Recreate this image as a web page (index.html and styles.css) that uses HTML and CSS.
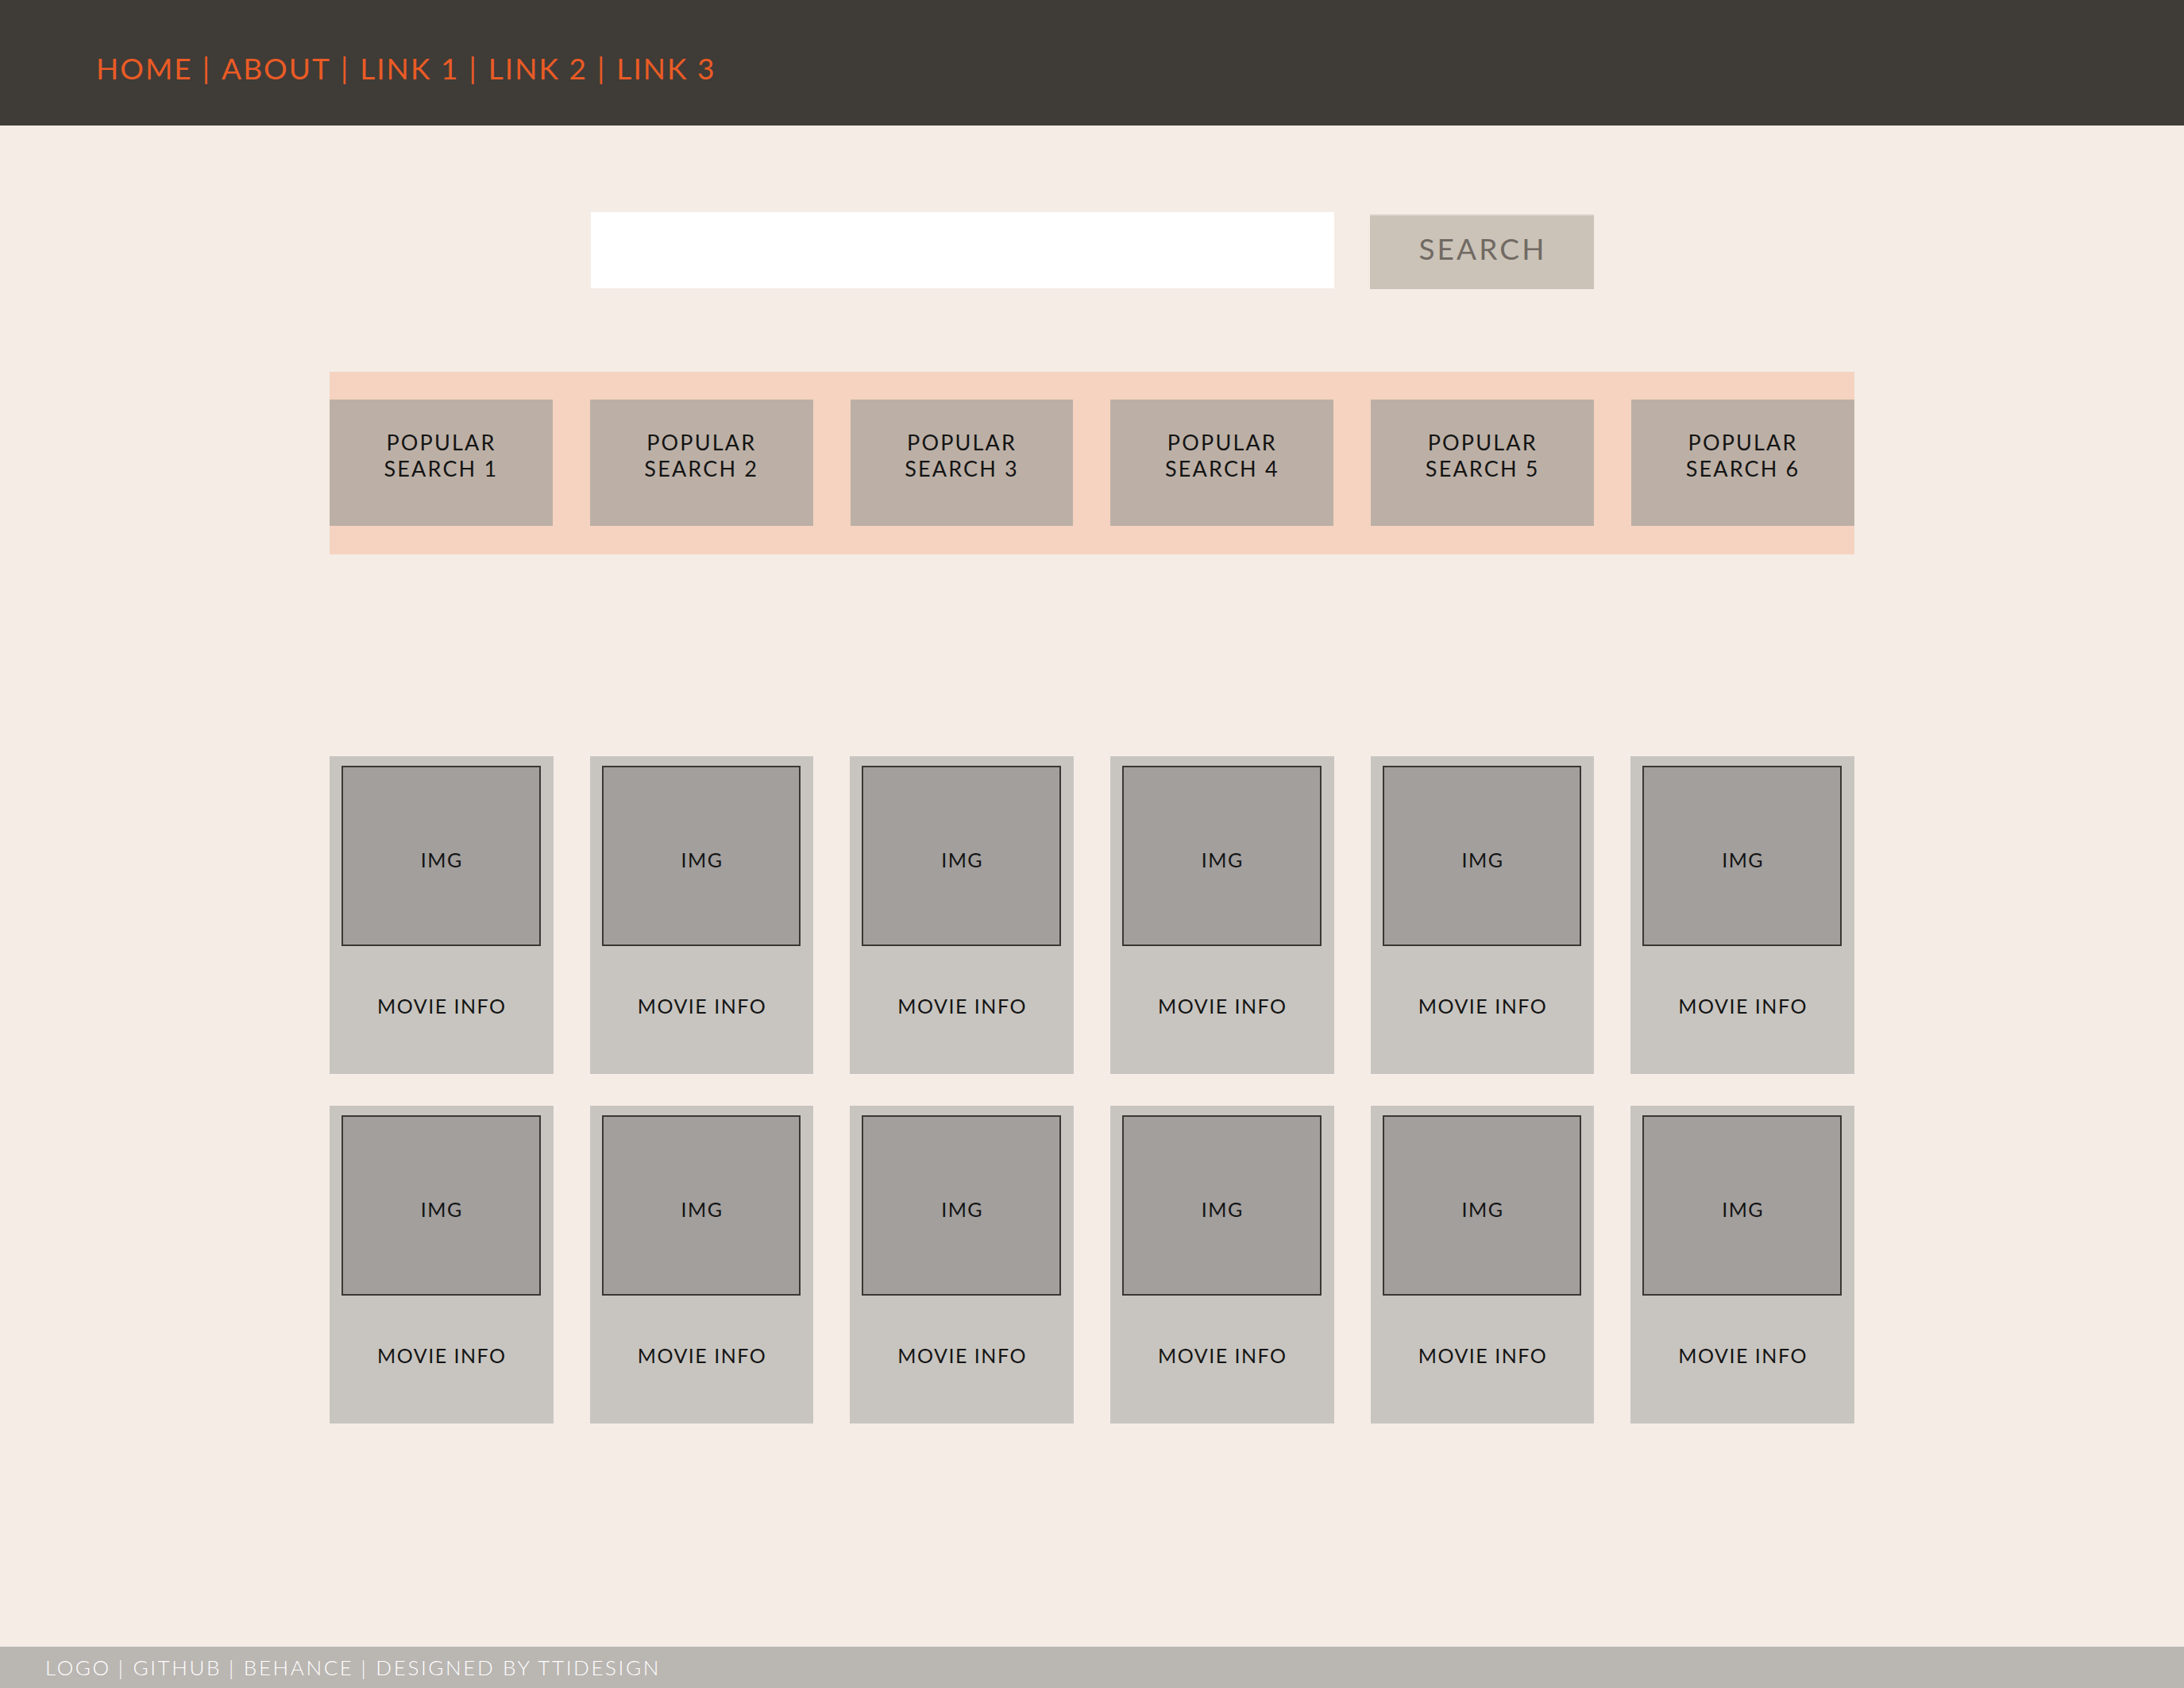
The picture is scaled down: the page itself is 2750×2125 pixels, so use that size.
FILE: index.html
```html
<!DOCTYPE html>
<html lang="en">
<head>
<meta charset="utf-8">
<title>Movie Search</title>
<link rel="stylesheet" href="styles.css">
</head>
<body>
<header class="site-header">
  <nav class="nav">
    <a class="nav-link" href="#">HOME</a><span class="sep">|</span><a class="nav-link" href="#">ABOUT</a><span class="sep">|</span><a class="nav-link" href="#">LINK 1</a><span class="sep">|</span><a class="nav-link" href="#">LINK 2</a><span class="sep">|</span><a class="nav-link" href="#">LINK 3</a>
  </nav>
</header>
<main class="main">
  <form class="search" onsubmit="return false">
    <input class="search-input" type="text" aria-label="Search">
    <button class="search-btn" type="submit">SEARCH</button>
  </form>
  <section class="popular">
    <div class="pop-tile">POPULAR<br>SEARCH 1</div>
    <div class="pop-tile">POPULAR<br>SEARCH 2</div>
    <div class="pop-tile">POPULAR<br>SEARCH 3</div>
    <div class="pop-tile">POPULAR<br>SEARCH 4</div>
    <div class="pop-tile">POPULAR<br>SEARCH 5</div>
    <div class="pop-tile">POPULAR<br>SEARCH 6</div>
  </section>
  <section class="movies">
    <div class="card"><div class="card-img">IMG</div><div class="card-info">MOVIE INFO</div></div>
    <div class="card"><div class="card-img">IMG</div><div class="card-info">MOVIE INFO</div></div>
    <div class="card"><div class="card-img">IMG</div><div class="card-info">MOVIE INFO</div></div>
    <div class="card"><div class="card-img">IMG</div><div class="card-info">MOVIE INFO</div></div>
    <div class="card"><div class="card-img">IMG</div><div class="card-info">MOVIE INFO</div></div>
    <div class="card"><div class="card-img">IMG</div><div class="card-info">MOVIE INFO</div></div>
    <div class="card"><div class="card-img">IMG</div><div class="card-info">MOVIE INFO</div></div>
    <div class="card"><div class="card-img">IMG</div><div class="card-info">MOVIE INFO</div></div>
    <div class="card"><div class="card-img">IMG</div><div class="card-info">MOVIE INFO</div></div>
    <div class="card"><div class="card-img">IMG</div><div class="card-info">MOVIE INFO</div></div>
    <div class="card"><div class="card-img">IMG</div><div class="card-info">MOVIE INFO</div></div>
    <div class="card"><div class="card-img">IMG</div><div class="card-info">MOVIE INFO</div></div>
  </section>
</main>
<footer class="site-footer">
  <span>LOGO</span><span class="fsep">|</span><span>GITHUB</span><span class="fsep">|</span><span>BEHANCE</span><span class="fsep">|</span><span>DESIGNED BY TTIDESIGN</span>
</footer>
</body>
</html>
```

FILE: styles.css
```css
* { box-sizing: border-box; }

html, body {
  margin: 0;
  padding: 0;
}

body {
  min-height: 100vh;
  display: flex;
  flex-direction: column;
  background: #f5ece6;
  font-family: Lato, "Noto Sans", "Liberation Sans", sans-serif;
  color: #141414;
}

.site-header {
  height: 158px;
  background: #3f3b37;
  padding: 64px 0 0 121px;
}

.nav {
  font-size: 37px;
  line-height: 1.2;
  letter-spacing: 0.055em;
  color: #ea5b25;
  white-space: nowrap;
}

.nav-link {
  color: #ea5b25;
  text-decoration: none;
}

.sep {
  margin: 0 13px 0 12px;
}

.main {
  width: 1920px;
  margin: 0 auto;
}

.search {
  display: flex;
  justify-content: center;
  gap: 45px;
  margin-top: 109px;
}

.search-input {
  width: 936px;
  height: 96px;
  border: none;
  background: #ffffff;
  outline: none;
  padding: 0 20px;
  font-family: inherit;
  font-size: 30px;
}

.search-btn {
  width: 282px;
  height: 94px;
  margin-top: 3px;
  border: none;
  border-top: 2px solid #d9d1c7;
  background: #cbc3b8;
  color: #716a63;
  font-family: inherit;
  font-size: 37px;
  letter-spacing: 0.085em;
  padding: 0 0 12px 3px;
}

.popular {
  display: flex;
  gap: 47px;
  margin-top: 104px;
  padding: 35px 0 36px;
  background: #f5d3c0;
}

.pop-tile {
  flex: 1;
  height: 159px;
  padding-top: 37px;
  background: #bcb0a6;
  text-align: center;
  font-size: 27px;
  line-height: 33px;
  letter-spacing: 0.08em;
}

.movies {
  display: grid;
  grid-template-columns: repeat(6, 1fr);
  column-gap: 46px;
  row-gap: 40px;
  margin-top: 254px;
}

.card {
  height: 400px;
  background: #c8c5c0;
  padding: 12px 16px 0 15px;
  display: flex;
  flex-direction: column;
}

.card-img {
  height: 227px;
  background: #a29f9d;
  border: 2px solid #3a3735;
  display: flex;
  align-items: center;
  justify-content: center;
  padding-top: 8px;
  padding-left: 2px;
  font-size: 25px;
  letter-spacing: 0.06em;
}

.card-info {
  flex: 1;
  display: flex;
  align-items: center;
  justify-content: center;
  padding-bottom: 11px;
  padding-left: 2px;
  font-size: 25px;
  letter-spacing: 0.06em;
}

.site-footer {
  margin-top: auto;
  height: 52px;
  background: #bab6b2;
  color: #ffffff;
  padding-left: 57px;
  font-size: 26px;
  font-weight: 300;
  line-height: 52px;
  letter-spacing: 0.1em;
  white-space: nowrap;
}

.fsep {
  margin: 0 10px 0 9px;
}
```
